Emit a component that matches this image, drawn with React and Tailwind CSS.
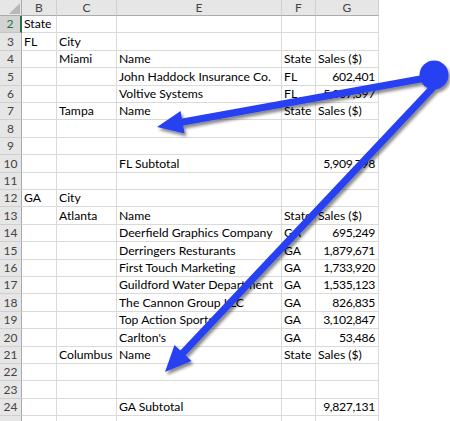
const cols = ["B", "C", "E", "F", "G"];

// row heights picked so gridlines land on whole pixels (about 17.4px each)
const heights = [17, 18, 17, 18, 17, 17, 18, 17, 18, 17, 17, 18, 17, 18, 17, 17, 18, 17, 18, 17, 17, 18, 17, 18];

const rows = [
  { n: 2, b: "State" },
  { n: 3, b: "FL", c: "City" },
  { n: 4, c: "Miami", e: "Name", f: "State", g: "Sales ($)", gl: true },
  { n: 5, e: "John Haddock Insurance Co.", f: "FL", g: "602,401" },
  { n: 6, e: "Voltive Systems", f: "FL", g: "5,307,397" },
  { n: 7, c: "Tampa", e: "Name", f: "State", g: "Sales ($)", gl: true },
  { n: 8 },
  { n: 9 },
  { n: 10, e: "FL Subtotal", g: "5,909,798" },
  { n: 11 },
  { n: 12, b: "GA", c: "City" },
  { n: 13, c: "Atlanta", e: "Name", f: "State", g: "Sales ($)", gl: true },
  { n: 14, e: "Deerfield Graphics Company", f: "GA", g: "695,249" },
  { n: 15, e: "Derringers Resturants", f: "GA", g: "1,879,671" },
  { n: 16, e: "First Touch Marketing", f: "GA", g: "1,733,920" },
  { n: 17, e: "Guildford Water Department", f: "GA", g: "1,535,123" },
  { n: 18, e: "The Cannon Group LLC", f: "GA", g: "826,835" },
  { n: 19, e: "Top Action Sports", f: "GA", g: "3,102,847" },
  { n: 20, e: "Carlton's", f: "GA", g: "53,486" },
  { n: 21, c: "Columbus", e: "Name", f: "State", g: "Sales ($)", gl: true },
  { n: 22 },
  { n: 23 },
  { n: 24, e: "GA Subtotal", g: "9,827,131" },
  { n: "" },
];

function Cell({ children, right }) {
  return (
    <div
      className={`flex items-end overflow-visible whitespace-nowrap border-b border-r border-[#dadada] pb-[1px] leading-[15px] ${
        right ? "justify-end pr-[3px] tracking-[-0.35px]" : "pl-[2px]"
      }`}
    >
      {children}
    </div>
  );
}

function Arrows() {
  return (
    <svg className="absolute left-0 top-0 pointer-events-none" width="450" height="421">
      <defs>
        <filter id="sh" x="-20%" y="-20%" width="140%" height="140%">
          <feDropShadow dx="2" dy="3" stdDeviation="1.8" floodColor="#000" floodOpacity="0.45" />
        </filter>
      </defs>
      <g filter="url(#sh)" fill="#2541f2" stroke="none">
        <line x1="426" y1="78" x2="180" y2="122.5" stroke="#2541f2" strokeWidth="7" />
        <polygon points="157,127 184.6,133.6 180.6,111" />
        <line x1="440" y1="80" x2="181" y2="355" stroke="#2541f2" strokeWidth="7" />
        <polygon points="165,372 191.5,361 174.5,345" />
        <circle cx="434" cy="75" r="14.5" />
      </g>
    </svg>
  );
}

export default function App() {
  return (
    <div
      className="relative h-[421px] w-[450px] overflow-hidden bg-white text-[12.2px] text-black"
      style={{ fontFamily: "Lato, 'Open Sans', sans-serif" }}
    >
      <div className="grid w-[379px] grid-cols-[22px_35px_60px_165px_34px_63px]">
        {/* header row */}
        <div className="relative h-[16px] border-b border-r border-[#ababab] bg-[#e6e6e6]">
          <svg className="absolute left-[9px] top-[3px]" width="11" height="11">
            <polygon points="11,0 11,11 0,11" fill="#b7b7b7" />
          </svg>
        </div>
        {cols.map((c) => (
          <div
            key={c}
            className="flex h-[16px] items-center justify-center border-b border-r border-b-[#ababab] border-r-[#cfcfcf] bg-[#e6e6e6] text-[12px] text-[#444]"
          >
            {c}
          </div>
        ))}

        {rows.map((r, i) => (
          <div key={i} className="contents">
            <div
              className={`flex items-center justify-center border-b text-[12px] ${
                heights[i] === 18 ? "h-[18px]" : "h-[17px]"
              } ${
                r.n === 2
                  ? "border-b-[#c4c4c4] border-r-2 border-r-[#217346] bg-[#d3d3d3] text-[#217346]"
                  : "border-b-[#cfcfcf] border-r border-r-[#ababab] bg-[#e6e6e6] text-[#444]"
              }`}
            >
              {r.n}
            </div>
            <Cell>{r.b}</Cell>
            <Cell>{r.c}</Cell>
            <Cell>{r.e}</Cell>
            <Cell>{r.f}</Cell>
            <Cell right={!r.gl}>{r.g}</Cell>
          </div>
        ))}
      </div>
      <Arrows />
    </div>
  );
}
